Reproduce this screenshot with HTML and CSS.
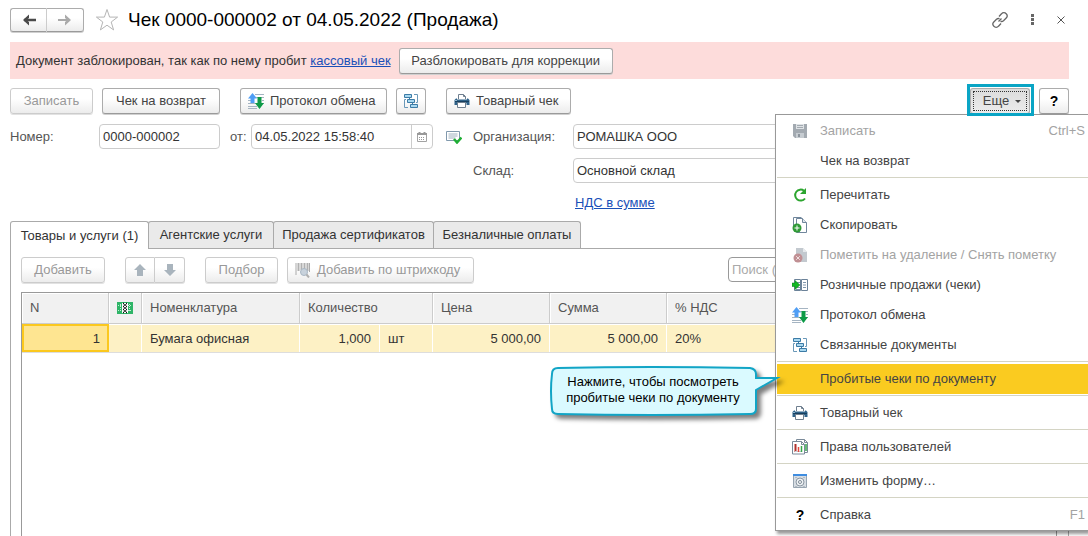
FILE: index.html
```html
<!DOCTYPE html>
<html lang="ru">
	<head>
		<meta charset="UTF-8" />
		<meta name="viewport" content="width=device-width, initial-scale=1.0" />
		<title>Чек 0000-000002 от 04.05.2022 (Продажа)</title>
		<link rel="stylesheet" href="styles.css">
	</head>
	<body>
		<!-- Icon set -->
		<svg class="icon-set" aria-hidden="true">
			<symbol id="i-exchange" viewBox="0 0 16 16">
				<path d="M7 1.500h9M8 4.500h8M0 7.500h3M0 10.500h9M0 13.500h9M0 15.500h9M14 7.500h2M14 10.500h2" stroke="#a5b4c2" />
				<path d="M4.500 0L9 5.500H6.500V10h-4V5.500H0z" fill="#4f9ef5" />
				<path d="M9.500 4h4v6H16l-4.500 6L7 10h2.500z" fill="#0d9a47" />
			</symbol>
			<symbol id="i-linked" viewBox="0 0 16 16">
				<path d="M3 6.500H1.500v8H5M11 1.500h3.500v8H13" fill="none" stroke="#6a98b8" />
				<path d="M1.500 1.500h7v3h-7zM4.500 6.500h7v3h-7zM7.500 11.500h7v3h-7z" fill="#a9d8f0" stroke="#3c7ba6" />
				<path d="M6.500 5v1M9.500 10v1" stroke="#3c7ba6" />
			</symbol>
			<symbol id="i-print" viewBox="0 0 16 16">
				<path d="M4.500 6V1.500h5l2 2V6" fill="#fff" stroke="#6f7f8f" />
				<path d="M9.500 1.500v2h2" fill="none" stroke="#6f7f8f" />
				<path d="M2 5.500h1v1h10v-1h1l1.500 1.500v5h-3v-2h-9v2h-3v-5z" fill="#2f6289" />
				<path d="M1 8.500h14" stroke="#173f5e" />
				<path d="M1 7.500h2" stroke="#8fb8d3" />
				<path d="M3.500 9.500h8v5h-8z" fill="#fff" stroke="#6f7f8f" />
			</symbol>
			<symbol id="i-calendar" viewBox="0 0 10 10">
				<path d="M.5 1.500h9v8h-9z" fill="#fff" stroke="#a3a3a3" />
				<path d="M0 2h10M2.500 0v2M7.500 0v2" stroke="#999" stroke-width="2" />
				<path d="M2 5.500h6M2 7.500h6" stroke="#999" stroke-dasharray="1 1" />
			</symbol>
			<symbol id="i-posted" viewBox="0 0 16 14">
				<path d="M.5 1.500h13v9H.5z" fill="#fff" stroke="#8199ad" />
				<path d="M2.500 4h9M2.500 6h9M2.500 8h7" stroke="#9fb0bf" />
				<path d="M8 9l3 3.500 4.500-5" fill="none" stroke="#1fae35" stroke-width="2.500" />
			</symbol>
			<symbol id="i-barcode" viewBox="0 0 16 16">
				<path d="M1 1v12M14.500 1v9" stroke="#aaa" />
				<path d="M3.500 1v8M6.500 1v7M9.500 1v7M12.500 1v8" stroke="#b0b0b0" stroke-width="2" />
				<circle cx="9" cy="10" r="3.500" fill="#c8d2dc" stroke="#a9b7c4" />
				<path d="M11.500 12.500L14 15.500" stroke="#b0b0b0" stroke-width="2" />
			</symbol>
			<symbol id="i-mark" viewBox="0 0 16 12">
				<path d="M0 0h16v12H0z" fill="#2fb568" />
				<path d="M1 3.500h4M1 8.500h4M11 3.500h4M11 8.500h4M3.500 2v8M12.500 2v8" stroke="#c8eed8" stroke-dasharray="1 1" />
				<path d="M5 1h6v10H5z" fill="#fff" />
				<path d="M6 1.500h1M9 1.500h1M7 3h2M6 4.500h1M9 4.500h1M7 6h2M6 7.500h1M9 7.500h1M7 9h2M6 10.500h1M9 10.500h1" stroke="#111" stroke-width="1.500" />
			</symbol>
			<symbol id="i-save" viewBox="0 0 16 16">
				<path d="M1 1h14v14H3l-2-2z" fill="#a3aab1" />
				<path d="M4 1h8v5H4z" fill="#dfe3e6" />
				<path d="M5 2.500h6M5 4.500h6" stroke="#a3aab1" />
				<path d="M4 10h8v5H4z" fill="#c6ccd1" />
				<path d="M6 11h2v3H6z" fill="#8d959d" />
			</symbol>
			<symbol id="i-reload" viewBox="0 0 16 16">
				<path d="M13 11.500A5.500 5.500 0 1 1 12 3.700" fill="none" stroke="#2ca52f" stroke-width="2" />
				<path d="M14 1v6H8z" fill="#2ca52f" />
			</symbol>
			<symbol id="i-copy" viewBox="0 0 16 16">
				<path d="M1.500 11V.5h8" fill="none" stroke="#70869c" />
				<path d="M4.500 1.500h6l4 4v10h-10z" fill="#fff" stroke="#70869c" />
				<path d="M10.500 1.500v4h4" fill="#dfe6ec" stroke="#70869c" />
				<circle cx="5" cy="11" r="4.500" fill="#2f9a36" />
				<path d="M2.500 11h5M5 8.500v5" stroke="#fff" />
			</symbol>
			<symbol id="i-delete" viewBox="0 0 16 16">
				<path d="M4 1h7l4 4v10H4z" fill="#c3c9cf" />
				<path d="M11 1v4h4" fill="#e6e9ec" />
				<circle cx="6" cy="11" r="4.500" fill="#c08f93" />
				<path d="M4.200 9.200l3.600 3.600M7.800 9.200l-3.600 3.600" stroke="#f0dfe0" />
			</symbol>
			<symbol id="i-retail" viewBox="0 0 16 16">
				<path d="M2.500 2.500h6v11h-6zM9.500 2.500h6v11h-6z" fill="#fff" stroke="#6b8299" />
				<path d="M4 5.500h4M4 10.500h4M4 12.500h4M11 5.500h3M11 8h3M11 10.500h3" stroke="#7e94aa" />
				<path d="M0 6h3V3.500L8 8l-5 4.500V9.500H0z" fill="#13b722" stroke="#0a7d18" stroke-width=".5" />
			</symbol>
			<symbol id="i-rights" viewBox="0 0 16 16">
				<path d="M4.500 3V.5h8l3 3v10H13" fill="#fff" stroke="#7b8a99" />
				<path d="M12.500 .5v3h3" fill="none" stroke="#7b8a99" />
				<path d="M.5 2.500h9l3 3v9.500H.5z" fill="#fff" stroke="#7b8a99" />
				<path d="M9.500 2.500v3h3" fill="none" stroke="#7b8a99" />
				<path d="M3.500 5v8" stroke="#b0302b" stroke-width="2" />
				<path d="M3 12.500h7" stroke="#c9d0d6" />
				<path d="M6.500 8v5" stroke="#e2483d" stroke-width="1.500" />
				<path d="M9.500 7v6M14 5v7" stroke="#36a84a" stroke-width="1.500" />
			</symbol>
			<symbol id="i-form" viewBox="0 0 16 16">
				<path d="M1.500 1.500h13v13h-13z" fill="#d7dde3" stroke="#98a5b1" />
				<path d="M1 1h14v2H1z" fill="#3f8de0" />
				<circle cx="8" cy="9" r="4" fill="#eef1f3" stroke="#8c98a3" />
				<circle cx="8" cy="9" r="1.500" fill="#fff" stroke="#7d8a96" />
				<path d="M3.500 4.500h1M11.500 4.500h1M3.500 13.500h1M11.500 13.500h1" stroke="#8c98a3" />
			</symbol>
			<symbol id="i-up" viewBox="0 0 12 12">
				<path d="M6 0l6 6H9v6H3V6H0z" fill="#a9b4bd" />
			</symbol>
			<symbol id="i-down" viewBox="0 0 12 12">
				<path d="M6 12L0 6h3V0h6v6h3z" fill="#a9b4bd" />
			</symbol>
		</svg>

		<main class="form">
			<header class="title-bar">
				<div class="split">
					<button class="btn" type="button" aria-label="Назад">
						<svg class="arrow" viewBox="0 0 14 12"><path d="M2 6h12" stroke="#4a4a4a" stroke-width="2.500" /><path d="M7 .5L1 6 7 11.500V8L4.500 6 7 4z" fill="#4a4a4a" /></svg>
					</button>
					<button class="btn" type="button" aria-label="Вперед">
						<svg class="arrow" viewBox="0 0 14 12"><path d="M0 6h12" stroke="#aaa" stroke-width="2" /><path d="M7 .5L13 6 7 11.500V8L9.500 6 7 4z" fill="#aaa" /></svg>
					</button>
				</div>
				<button class="plain star" type="button" aria-label="В избранное">
					<svg width="24" height="24" viewBox="0 0 24 24"><path d="M12 1.500l2.600 7.600h8l-6.400 4.900 2.400 7.900L12 17.200l-6.600 4.700L7.800 14 1.400 9.100h8z" fill="#fff" stroke="#b5b5b5" /></svg>
				</button>
				<h1>Чек 0000-000002 от 04.05.2022 (Продажа)</h1>
				<div class="window-tools">
					<button class="plain" type="button" aria-label="Получить ссылку">
						<svg width="16" height="16" viewBox="0 0 16 16" fill="none" stroke="#666" stroke-width="1.300"><path d="M7 4.500l2.500-2.700a3 3 0 0 1 4.700 0 3 3 0 0 1 0 4.200L11.500 8.700a3 3 0 0 1-3 .6M9 11.500l-2.500 2.700a3 3 0 0 1-4.700 0 3 3 0 0 1 0-4.200L4.500 7.300a3 3 0 0 1 3-.6M6.500 9.500l3-3" /></svg>
					</button>
					<button class="plain" type="button" aria-label="Меню">
						<svg width="3" height="12" viewBox="0 0 3 12" fill="#666"><path d="M0 0h3v3H0zM0 4h3v3H0zM0 8h3v3H0z" /></svg>
					</button>
					<button class="plain" type="button" aria-label="Закрыть">
						<svg width="8" height="8" viewBox="0 0 8 8"><path d="M.5 .5l7 7M7.500 .5l-7 7" stroke="#555" /></svg>
					</button>
				</div>
			</header>

			<div class="alert">
				<span>Документ заблокирован, так как по нему пробит <a href="#">кассовый чек</a></span>
				<button class="btn unlock" type="button">Разблокировать для коррекции</button>
			</div>

			<div class="toolbar">
				<button class="btn write" type="button" disabled>Записать</button>
				<button class="btn refund" type="button">Чек на возврат</button>
				<div class="group">
					<button class="btn with-icon protocol" type="button"><svg class="icon"><use href="#i-exchange" /></svg>Протокол обмена</button>
					<button class="btn square" type="button" aria-label="Связанные документы"><svg class="icon"><use href="#i-linked" /></svg></button>
				</div>
				<div class="group">
					<button class="btn with-icon receipt" type="button"><svg class="icon"><use href="#i-print" /></svg>Товарный чек</button>
				</div>
				<div class="toolbar-end">
					<div class="more">
						<button class="btn" type="button" aria-haspopup="true" aria-expanded="true">Еще<i class="caret"></i></button>
					</div>
					<button class="btn square help" type="button">?</button>
				</div>

				<ul class="menu" role="menu">
					<li class="off"><svg class="icon"><use href="#i-save" /></svg>Записать<kbd>Ctrl+S</kbd></li>
					<li><span class="icon"></span>Чек на возврат</li>
					<li class="line"></li>
					<li><svg class="icon"><use href="#i-reload" /></svg>Перечитать</li>
					<li><svg class="icon"><use href="#i-copy" /></svg>Скопировать</li>
					<li class="off"><svg class="icon"><use href="#i-delete" /></svg>Пометить на удаление / Снять пометку</li>
					<li><svg class="icon"><use href="#i-retail" /></svg>Розничные продажи (чеки)</li>
					<li><svg class="icon"><use href="#i-exchange" /></svg>Протокол обмена</li>
					<li><svg class="icon"><use href="#i-linked" /></svg>Связанные документы</li>
					<li class="line"></li>
					<li class="current">
						<span class="icon"></span>Пробитые чеки по документу
						<div class="callout">
							<svg width="236" height="60" viewBox="0 0 236 60">
								<path d="M8 3Q100 1 200 3Q206 4 206 9V13L227 13L206 25V44Q206 49 200 49Q100 51 8 49Q2 49 2 44Q0 26 2 9Q2 3 8 3z" fill="#dafaff" stroke="#12a5c6" stroke-width="2" />
							</svg>
							<p>Нажмите, чтобы посмотреть<br />пробитые чеки по документу</p>
						</div>
					</li>
					<li class="line"></li>
					<li><svg class="icon"><use href="#i-print" /></svg>Товарный чек</li>
					<li class="line"></li>
					<li><svg class="icon"><use href="#i-rights" /></svg>Права пользователей</li>
					<li class="line"></li>
					<li><svg class="icon"><use href="#i-form" /></svg>Изменить форму…</li>
					<li class="line"></li>
					<li><b class="icon">?</b>Справка<kbd>F1</kbd></li>
				</ul>
			</div>

			<div class="fields">
				<div class="field-row">
					<label class="number-label" for="number">Номер:</label>
					<input class="input number" id="number" type="text" value="0000-000002" />
					<label class="date-label" for="date">от:</label>
					<div class="input date">
						<input id="date" type="text" value="04.05.2022 15:58:40" />
						<button type="button" aria-label="Выбрать дату"><svg width="10" height="10"><use href="#i-calendar" /></svg></button>
					</div>
					<svg class="posted" width="16" height="14"><use href="#i-posted" /></svg>
				</div>
				<div class="field-grid">
					<label for="org">Организация:</label>
					<input class="input" id="org" type="text" value="РОМАШКА ООО" />
					<label for="store">Склад:</label>
					<input class="input" id="store" type="text" value="Основной склад" />
					<a class="vat" href="#">НДС в сумме</a>
				</div>
			</div>

			<div class="tabs" role="tablist">
				<button class="tab active" type="button" role="tab" aria-selected="true">Товары и услуги (1)</button>
				<button class="tab agent" type="button" role="tab">Агентские услуги</button>
				<button class="tab cert" type="button" role="tab">Продажа сертификатов</button>
				<button class="tab cashless" type="button" role="tab">Безналичные оплаты</button>
			</div>

			<section class="panel">
				<div class="commands">
					<button class="btn add" type="button" disabled>Добавить</button>
					<div class="split move">
						<button class="btn" type="button" aria-label="Вверх" disabled><svg width="12" height="12"><use href="#i-up" /></svg></button>
						<button class="btn" type="button" aria-label="Вниз" disabled><svg width="12" height="12"><use href="#i-down" /></svg></button>
					</div>
					<button class="btn pick" type="button" disabled>Подбор</button>
					<button class="btn with-icon scan" type="button" disabled><svg class="icon"><use href="#i-barcode" /></svg>Добавить по штрихкоду</button>
					<input class="input search" type="search" aria-label="Поиск" placeholder="Поиск (Ctrl+F)" />
				</div>

				<div class="goods">
					<table>
						<colgroup>
							<col class="c-n" /><col class="c-mark" /><col class="c-name" /><col class="c-qty" /><col class="c-unit" /><col class="c-sum" /><col class="c-sum" /><col />
						</colgroup>
						<thead>
							<tr>
								<th>N</th>
								<th class="mark"><svg width="16" height="12"><use href="#i-mark" /></svg></th>
								<th>Номенклатура</th>
								<th colspan="2">Количество</th>
								<th>Цена</th>
								<th>Сумма</th>
								<th>% НДС</th>
							</tr>
						</thead>
						<tbody>
							<tr>
								<td class="num selected">1</td>
								<td></td>
								<td>Бумага офисная</td>
								<td class="num">1,000</td>
								<td>шт</td>
								<td class="num">5 000,00</td>
								<td class="num">5 000,00</td>
								<td>20%</td>
							</tr>
						</tbody>
					</table>
				</div>
			</section>
		</main>
	</body>
</html>
```

FILE: styles.css
```css
* {
	box-sizing: border-box;
}

body {
	margin: 0;
	background: #fff;
	color: #333;
	font: 13px/16px "Liberation Sans", Arial, sans-serif;
}

button,
input {
	font: inherit;
	color: inherit;
}

a {
	color: #1a50b8;
}

.icon-set {
	display: none;
}

.icon {
	width: 16px;
	height: 16px;
	flex: none;
}

.form {
	display: flex;
	flex-direction: column;
	height: 100vh;
	padding: 8px 19px 0 10px;
	overflow: hidden;
}

/* Buttons */
.btn {
	display: flex;
	align-items: center;
	justify-content: center;
	gap: 6px;
	height: 26px;
	padding: 0;
	background: linear-gradient(#fff 40%, #ececec);
	border: 1px solid #acacac;
	border-bottom-color: #9a9a9a;
	border-radius: 3px;
	box-shadow: 0 1px 0 #d0d0d0;
	color: #444;
	white-space: nowrap;
}

.btn:disabled {
	border-color: #ccc;
	box-shadow: 0 1px 0 #e2e2e2;
	color: #999;
}

.with-icon {
	justify-content: flex-start;
	padding-left: 7px;
}

.square {
	width: 30px;
}

.plain {
	display: flex;
	padding: 0;
	background: none;
	border: none;
}

.split {
	display: flex;
}

.split .btn {
	width: 37px;
	height: 24px;
}

.split .btn:first-child {
	border-right-color: #ccc;
	border-radius: 3px 0 0 3px;
}

.split .btn:last-child {
	border-left: none;
	border-radius: 0 3px 3px 0;
}

/* Title */
.title-bar {
	display: flex;
	align-items: center;
	height: 24px;
}

.arrow {
	width: 14px;
	height: 12px;
}

.star {
	margin: 0 9px 0 11px;
}

h1 {
	margin: 0;
	color: #000;
	font-size: 19px;
	font-weight: normal;
	line-height: 24px;
}

.window-tools {
	display: flex;
	align-items: center;
	gap: 23px;
	margin-left: auto;
	padding-right: 4px;
}

/* Locked document message */
.alert {
	display: flex;
	align-items: center;
	gap: 8px;
	height: 37px;
	margin-top: 10px;
	padding-left: 6px;
	background: #fddcdb;
}

.unlock {
	width: 214px;
}

/* Main toolbar */
.toolbar {
	position: relative;
	display: flex;
	gap: 9px;
	margin-top: 9px;
}

.write {
	width: 83px;
}

.refund {
	width: 118px;
}

.group {
	display: flex;
	gap: 9px;
	margin-left: 11px;
}

.protocol {
	width: 147px;
}

.receipt {
	width: 125px;
}

.toolbar-end {
	display: flex;
	gap: 9px;
	margin-left: auto;
}

.more {
	position: relative;
	z-index: 3;
}

.more .btn {
	width: 60px;
	padding-left: 4px;
	background: linear-gradient(#dcdcdc, #ececec);
	outline: 1px dotted #333;
	outline-offset: -4px;
}

.more::after {
	content: "";
	position: absolute;
	inset: -4px -4px -2px -3px;
	border: 3px solid #0aa5c5;
	pointer-events: none;
}

.caret {
	border: 3px solid transparent;
	border-top-color: #444;
	border-bottom: none;
}

.help {
	color: #000;
	font-size: 14px;
	font-weight: bold;
}

/* Drop-down menu */
.menu {
	position: absolute;
	z-index: 2;
	top: 26px;
	right: -19px;
	width: 313px;
	margin: 0;
	padding: 1px 0 0 1px;
	list-style: none;
	background: #fff;
	border: 1px solid #999;
	border-right: none;
	box-shadow: 2px 3px 3px rgba(0, 0, 0, 0.4);
	color: #444;
}

.menu li {
	position: relative;
	display: flex;
	align-items: center;
	gap: 12px;
	height: 30px;
	padding: 0 3px 0 15px;
}

.menu .line {
	height: 1px;
	margin: 1px 0 2px;
	padding: 0;
	background: #d4d4c4;
}

.menu .off,
.menu kbd {
	color: #a3a3a3;
}

.menu kbd {
	margin-left: auto;
	font: inherit;
}

.menu b {
	color: #000;
	font-size: 14px;
	text-align: center;
}

.menu .current {
	background: #facb20;
}

.callout {
	position: absolute;
	top: 1px;
	right: 100%;
	width: 227px;
	height: 50px;
	color: #000;
}

.callout svg {
	position: absolute;
	filter: drop-shadow(4px 4px 2px rgba(0, 0, 0, 0.5));
}

.callout p {
	position: relative;
	width: 206px;
	margin: 0;
	padding-top: 9px;
	text-align: center;
	white-space: nowrap;
}

/* Document fields */
.fields {
	display: flex;
	align-items: flex-start;
	gap: 11px;
	margin-top: 10px;
}

label {
	color: #555;
}

.field-row {
	display: flex;
	align-items: center;
}

.input {
	height: 25px;
	padding: 0 3px;
	background: #fff;
	border: 1px solid #ccc;
	border-radius: 4px;
	color: #333;
}

.number-label {
	width: 89px;
}

.number {
	width: 121px;
}

.date-label {
	width: 31px;
	padding-left: 10px;
}

.date {
	display: flex;
	width: 182px;
	padding-right: 0;
}

.date input {
	flex: 1;
	min-width: 0;
	padding: 0;
	border: none;
	background: none;
}

.date button {
	display: flex;
	align-items: center;
	justify-content: center;
	width: 21px;
	padding: 0;
	background: none;
	border: none;
	border-left: 1px solid #ccc;
}

.posted {
	margin-left: 13px;
}

.field-grid {
	display: grid;
	flex: 1;
	grid-template-columns: 100px 1fr;
	align-items: center;
	row-gap: 9px;
}

.vat {
	grid-column: 2;
	justify-self: start;
	margin: 3px 0 0 2px;
}

/* Tabs */
.tabs {
	display: flex;
	margin-top: 10px;
}

.tab {
	height: 27px;
	margin-right: -1px;
	padding: 0;
	background: #eaeaea;
	border: 1px solid #aaa;
	border-bottom: none;
	border-radius: 3px 3px 0 0;
	white-space: nowrap;
}

.tab.active {
	z-index: 1;
	width: 139px;
	height: 28px;
	margin-bottom: -1px;
	background: #fff;
}

.agent {
	width: 126px;
}

.cert {
	width: 161px;
}

.cashless {
	width: 148px;
}

.panel {
	display: flex;
	flex: 1;
	flex-direction: column;
	padding: 8px 11px 0 10px;
	border: 1px solid #aaa;
	border-bottom: none;
}

.commands {
	display: flex;
}

.add {
	width: 84px;
}

.move {
	margin: 0 20px;
}

.move .btn {
	width: 30px;
	height: 26px;
}

.pick {
	width: 73px;
}

.scan {
	width: 187px;
	margin-left: 9px;
}

.search {
	width: 329px;
	margin-left: auto;
	border-color: #999;
}

.search::placeholder {
	color: #aaa;
}

/* Goods table */
.goods {
	flex: 1;
	margin-top: 9px;
	border: 1px solid #999;
	border-bottom: none;
}

table {
	width: 100%;
	table-layout: fixed;
	border-collapse: separate;
	border-spacing: 0;
}

.c-n {
	width: 87px;
}

.c-mark {
	width: 33px;
}

.c-name {
	width: 158px;
}

.c-qty {
	width: 80px;
}

.c-unit {
	width: 53px;
}

.c-sum {
	width: 117px;
}

th {
	height: 31px;
	padding: 0 8px;
	background: #f1f1f1;
	border-right: 1px solid #ccc;
	border-bottom: 1px solid #ccc;
	box-shadow: inset 1px 1px #fff;
	color: #555;
	font-weight: normal;
	text-align: left;
}

th.mark {
	text-align: center;
}

.mark svg {
	display: block;
	margin: auto;
}

td {
	height: 28px;
	padding: 0 8px;
	background: #fdf1c5;
	border: solid #fff;
	border-width: 1px 1px 0 0;
	box-shadow: 0 1px #ddd;
}

.num {
	text-align: right;
}

.selected {
	background: #fee591;
	outline: 2px solid #fbc81e;
	outline-offset: -2px;
}
```
